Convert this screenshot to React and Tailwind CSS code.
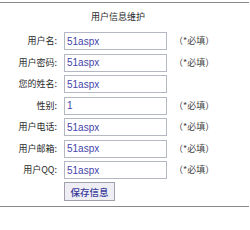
const rows = [
  { label: '用户名:', value: '51aspx', required: true },
  { label: '用户密码:', value: '51aspx', required: true },
  { label: '您的姓名:', value: '51aspx', required: false },
  { label: '性别:', value: '1', required: true },
  { label: '用户电话:', value: '51aspx', required: true },
  { label: '用户邮箱:', value: '51aspx', required: true },
  { label: '用户QQ:', value: '51aspx', required: true },
]

export default function App() {
  return (
    <div className="w-[250px] h-[230px] bg-white pt-[2px] text-[9px] text-[#2a2a2a] font-['Noto_Sans_CJK_SC',sans-serif]">
      <div className="w-[249px] border-t border-b border-[#8a8a8a] pb-[4px]">
        <div className="h-[27.5px] pt-[8px] pl-[91px] leading-[12px]">用户信息维护</div>
        <div className="flex flex-col">
          {rows.map((row) => (
            <div key={row.label} className="flex items-center h-[21.5px]">
              <div className="w-[57px] text-right leading-[12px]">{row.label}</div>
              <input
                readOnly
                value={row.value}
                className="ml-[7px] w-[103px] h-[18px] border border-[#b4b8c2] bg-white px-[2px] text-[10px] text-[#4444aa] font-['Liberation_Sans',sans-serif] outline-none"
              />
              {row.required && <div className="ml-[7px] leading-[12px] text-[#444]">（*必填）</div>}
            </div>
          ))}
          <div className="flex h-[21px] items-center">
            <button className="ml-[64px] w-[51px] h-[19px] border border-[#a0a0ac] bg-[#eeeef4] text-[9.5px] font-medium text-[#3a3a9a] leading-[12px]">
              保存信息
            </button>
          </div>
        </div>
      </div>
    </div>
  )
}
